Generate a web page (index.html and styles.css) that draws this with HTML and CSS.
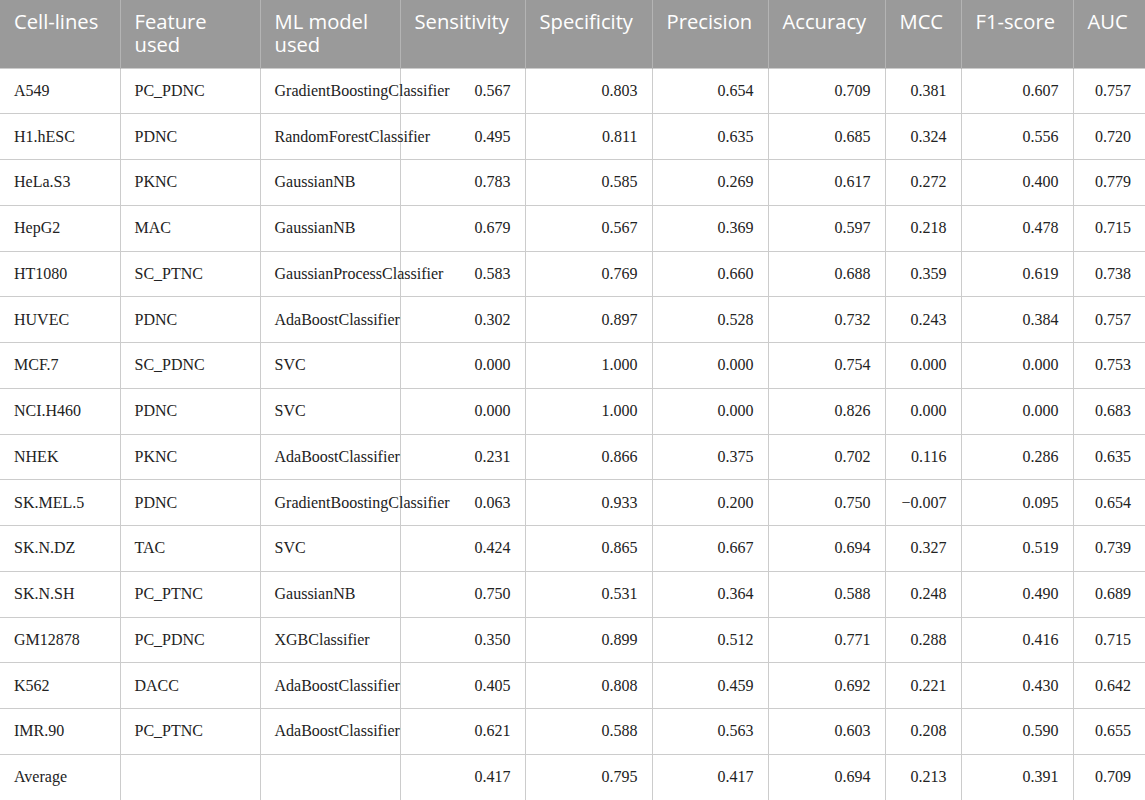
FILE: index.html
```html
<!DOCTYPE html>
<html>
<head>
<meta charset="utf-8">
<link rel="stylesheet" href="styles.css">
</head>
<body>
<table class="results">
<colgroup>
<col class="c1"><col class="c2"><col class="c3"><col class="c4"><col class="c5"><col class="c6"><col class="c7"><col class="c8"><col class="c9"><col class="c10">
</colgroup>
<thead>
<tr><th>Cell-lines</th><th>Feature used</th><th>ML model used</th><th>Sensitivity</th><th>Specificity</th><th>Precision</th><th>Accuracy</th><th>MCC</th><th>F1-score</th><th>AUC</th></tr>
</thead>
<tbody>
<tr><td>A549</td><td>PC_PDNC</td><td>GradientBoostingClassifier</td><td class="n">0.567</td><td class="n">0.803</td><td class="n">0.654</td><td class="n">0.709</td><td class="n">0.381</td><td class="n">0.607</td><td class="n">0.757</td></tr>
<tr><td>H1.hESC</td><td>PDNC</td><td>RandomForestClassifier</td><td class="n">0.495</td><td class="n">0.811</td><td class="n">0.635</td><td class="n">0.685</td><td class="n">0.324</td><td class="n">0.556</td><td class="n">0.720</td></tr>
<tr><td>HeLa.S3</td><td>PKNC</td><td>GaussianNB</td><td class="n">0.783</td><td class="n">0.585</td><td class="n">0.269</td><td class="n">0.617</td><td class="n">0.272</td><td class="n">0.400</td><td class="n">0.779</td></tr>
<tr><td>HepG2</td><td>MAC</td><td>GaussianNB</td><td class="n">0.679</td><td class="n">0.567</td><td class="n">0.369</td><td class="n">0.597</td><td class="n">0.218</td><td class="n">0.478</td><td class="n">0.715</td></tr>
<tr><td>HT1080</td><td>SC_PTNC</td><td>GaussianProcessClassifier</td><td class="n">0.583</td><td class="n">0.769</td><td class="n">0.660</td><td class="n">0.688</td><td class="n">0.359</td><td class="n">0.619</td><td class="n">0.738</td></tr>
<tr><td>HUVEC</td><td>PDNC</td><td>AdaBoostClassifier</td><td class="n">0.302</td><td class="n">0.897</td><td class="n">0.528</td><td class="n">0.732</td><td class="n">0.243</td><td class="n">0.384</td><td class="n">0.757</td></tr>
<tr><td>MCF.7</td><td>SC_PDNC</td><td>SVC</td><td class="n">0.000</td><td class="n">1.000</td><td class="n">0.000</td><td class="n">0.754</td><td class="n">0.000</td><td class="n">0.000</td><td class="n">0.753</td></tr>
<tr><td>NCI.H460</td><td>PDNC</td><td>SVC</td><td class="n">0.000</td><td class="n">1.000</td><td class="n">0.000</td><td class="n">0.826</td><td class="n">0.000</td><td class="n">0.000</td><td class="n">0.683</td></tr>
<tr><td>NHEK</td><td>PKNC</td><td>AdaBoostClassifier</td><td class="n">0.231</td><td class="n">0.866</td><td class="n">0.375</td><td class="n">0.702</td><td class="n">0.116</td><td class="n">0.286</td><td class="n">0.635</td></tr>
<tr><td>SK.MEL.5</td><td>PDNC</td><td>GradientBoostingClassifier</td><td class="n">0.063</td><td class="n">0.933</td><td class="n">0.200</td><td class="n">0.750</td><td class="n">−0.007</td><td class="n">0.095</td><td class="n">0.654</td></tr>
<tr><td>SK.N.DZ</td><td>TAC</td><td>SVC</td><td class="n">0.424</td><td class="n">0.865</td><td class="n">0.667</td><td class="n">0.694</td><td class="n">0.327</td><td class="n">0.519</td><td class="n">0.739</td></tr>
<tr><td>SK.N.SH</td><td>PC_PTNC</td><td>GaussianNB</td><td class="n">0.750</td><td class="n">0.531</td><td class="n">0.364</td><td class="n">0.588</td><td class="n">0.248</td><td class="n">0.490</td><td class="n">0.689</td></tr>
<tr><td>GM12878</td><td>PC_PDNC</td><td>XGBClassifier</td><td class="n">0.350</td><td class="n">0.899</td><td class="n">0.512</td><td class="n">0.771</td><td class="n">0.288</td><td class="n">0.416</td><td class="n">0.715</td></tr>
<tr><td>K562</td><td>DACC</td><td>AdaBoostClassifier</td><td class="n">0.405</td><td class="n">0.808</td><td class="n">0.459</td><td class="n">0.692</td><td class="n">0.221</td><td class="n">0.430</td><td class="n">0.642</td></tr>
<tr><td>IMR.90</td><td>PC_PTNC</td><td>AdaBoostClassifier</td><td class="n">0.621</td><td class="n">0.588</td><td class="n">0.563</td><td class="n">0.603</td><td class="n">0.208</td><td class="n">0.590</td><td class="n">0.655</td></tr>
<tr><td>Average</td><td></td><td></td><td class="n">0.417</td><td class="n">0.795</td><td class="n">0.417</td><td class="n">0.694</td><td class="n">0.213</td><td class="n">0.391</td><td class="n">0.709</td></tr>
</tbody>
</table>
</body>
</html>
```
FILE: styles.css
```css
html, body {
  margin: 0;
  padding: 0;
  background: #ffffff;
}
.results {
  width: 1145px;
  table-layout: fixed;
  border-collapse: collapse;
}
.c1 { width: 120px; }
.c2 { width: 140px; }
.c3 { width: 140px; }
.c4 { width: 125px; }
.c5 { width: 127px; }
.c6 { width: 116px; }
.c7 { width: 117px; }
.c8 { width: 76px; }
.c9 { width: 112px; }
.c10 { width: 72px; }
.results th {
  background: #9a9a9a;
  color: #ffffff;
  font-family: "Open Sans", "Noto Sans", sans-serif;
  font-weight: 400;
  font-size: 20.2px;
  line-height: 23px;
  text-align: left;
  vertical-align: top;
  padding: 10px 14px 0 14px;
  height: 68px;
  box-sizing: border-box;
  border-left: 1px solid #b4b4b4;
  border-right: 1px solid #b4b4b4;
}
.results td {
  font-family: "Liberation Serif", "Times New Roman", serif;
  font-size: 16px;
  color: #222222;
  height: 45.75px;
  box-sizing: border-box;
  padding: 0 14px;
  vertical-align: middle;
  white-space: nowrap;
  border: 1px solid #cccccc;
}
.results td.n {
  text-align: right;
}
.results tr > :first-child { border-left: none; }
.results tr > :last-child { border-right: none; }
```
